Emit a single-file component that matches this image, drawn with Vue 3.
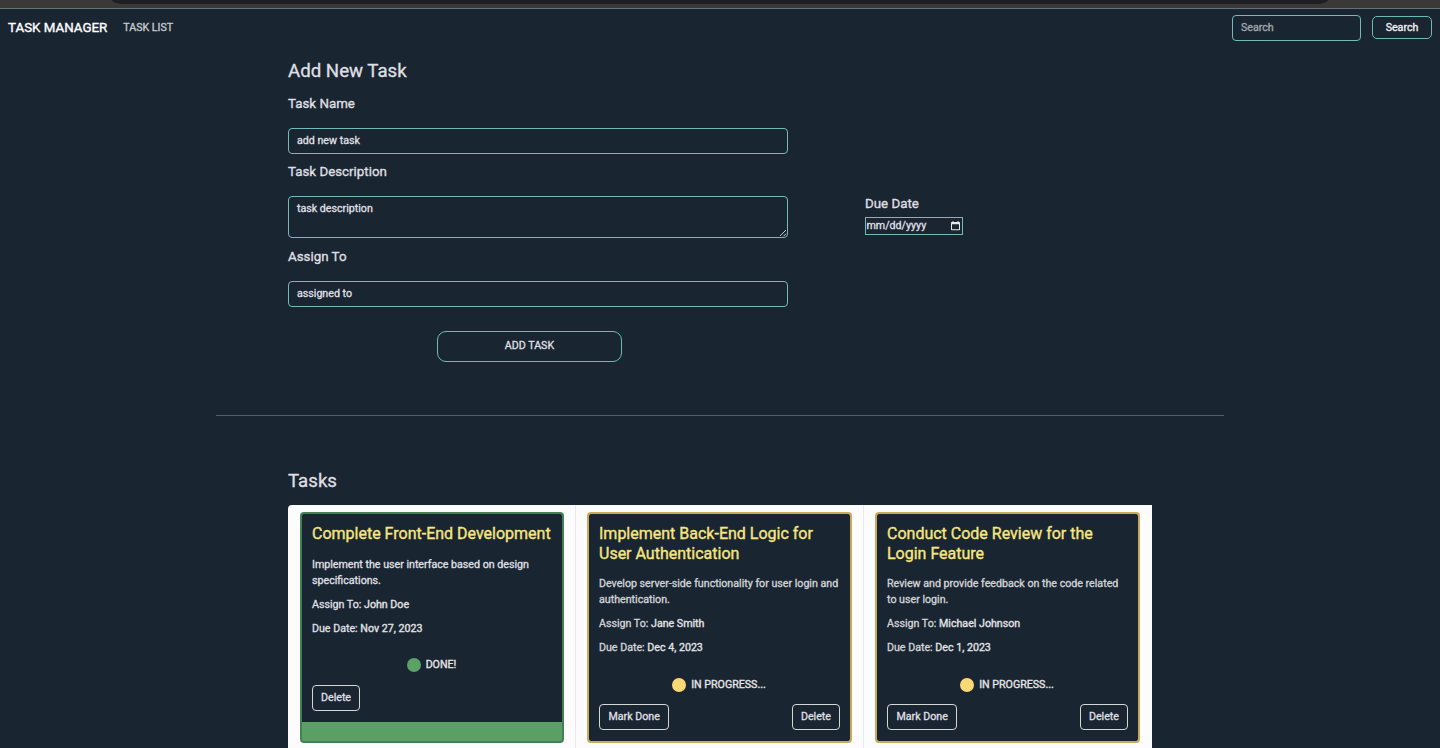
<script setup>
const tasks = [
  { title: ['Complete Front-End Development'], text: ['Implement the user interface based on design', 'specifications.'], who: 'John Doe', due: 'Nov 27, 2023', done: true },
  { title: ['Implement Back-End Logic for', 'User Authentication'], text: ['Develop server-side functionality for user login and', 'authentication.'], who: 'Jane Smith', due: 'Dec 4, 2023', done: false },
  { title: ['Conduct Code Review for the', 'Login Feature'], text: ['Review and provide feedback on the code related', 'to user login.'], who: 'Michael Johnson', due: 'Dec 1, 2023', done: false },
]
</script>

<template>
  <div class="page">
    <div class="chrome"><div class="bar"></div></div>
    <nav class="nav">
      <span class="brand">TASK MANAGER</span>
      <span class="link">TASK LIST</span>
      <div class="search">Search</div>
      <button class="search-btn">Search</button>
    </nav>
    <main class="main">
      <h3>Add New Task</h3>
      <div class="form">
        <div class="fields">
          <h5>Task Name</h5>
          <div class="input">add new task</div>
          <h5>Task Description</h5>
          <div class="input area">task description
            <svg class="grip" width="8" height="8" viewBox="0 0 8 8"><path d="M1 7l6-6M4.5 7.2L7 4.7" stroke="#dcdcdc" stroke-width=".9" fill="none" /></svg>
          </div>
          <h5>Assign To</h5>
          <div class="input">assigned to</div>
          <button class="add">ADD TASK</button>
        </div>
        <div class="due">
          <h5>Due Date</h5>
          <div class="date">
            <span>mm/dd/yyyy</span>
            <svg width="9" height="10" viewBox="0 0 9 10"><path d="M.8 1H1.5V0h1v1h4V0h1v1h.7q.8 0 .8.8v6.6q0 .8-.8.8H.8q-.8 0-.8-.8V1.8Q0 1 .8 1zM1 3.3v4.9h7V3.3z" fill="#e8e8e8" fill-rule="evenodd" /></svg>
          </div>
        </div>
      </div>
    </main>
    <hr>
    <section class="tasks">
      <h3>Tasks</h3>
      <div class="group">
        <div v-for="t in tasks" :key="t.title[0]" class="cell">
          <article class="card" :class="{ done: t.done }">
            <div class="body">
              <h4><div v-for="l in t.title" :key="l">{{ l }}</div></h4>
              <p><span v-for="l in t.text" :key="l" class="line">{{ l }}</span></p>
              <p>Assign To: <b>{{ t.who }}</b></p>
              <p>Due Date: <b>{{ t.due }}</b></p>
              <div class="status"><i></i>{{ t.done ? 'DONE!' : 'IN PROGRESS...' }}</div>
              <div class="actions">
                <button v-if="!t.done">Mark Done</button>
                <button>Delete</button>
              </div>
            </div>
          </article>
        </div>
      </div>
    </section>
  </div>
</template>

<style>
body { margin: 0; background: #1a2532; overflow: hidden; }
</style>

<style scoped>
* { box-sizing: border-box; }
.page { height: 748px; overflow: hidden; background: #1a2532; color: #dedfe0; font: 400 10.67px/16px Roboto, sans-serif; -webkit-text-stroke: .35px currentColor; }
.chrome { height: 9px; background: #3a3937; border-bottom: 1px solid #687276; padding: 0 112px; }
.bar { height: 4px; background: #1e1f23; border-radius: 0 0 12px 12px / 0 0 4px 4px; }
.nav { height: 38px; display: flex; align-items: center; padding: 0 8px; }
.brand { font-size: 13.33px; color: #fff; margin-right: 16px; }
.link { color: #c4c8cc; margin-right: auto; }
.search { width: 129px; height: 26px; border: 1px solid #72bbb8; border-radius: 4px; padding: 4px 8px; color: #9fa6ac; margin-right: 11px; }
button { font: inherit; color: inherit; background: transparent; padding: 0; -webkit-text-stroke: inherit; }
.search-btn { width: 60px; height: 23px; margin-bottom: 1px; border: 1px solid #6fb9b4; border-radius: 5px; color: #eee; }
.main { width: 864px; margin: 0 auto; padding-top: 13px; height: 368px; }
h3, h4, h5 { margin: 0; font-weight: 400; }
h3 { font-size: 18.67px; line-height: 23px; }
h5 { font-size: 13.33px; line-height: 16px; }
.form { display: flex; padding-top: 13px; }
.fields { width: 500px; }
.input { height: 26px; border: 1px solid #72bbb8; border-radius: 4px; padding: 4px 8px; margin: 16px 0 10px; position: relative; }
.area { height: 42px; margin-bottom: 11px; }
.grip { position: absolute; right: 0; bottom: 0; }
.add { display: block; width: 185px; height: 31px; border: 1px solid #6fb9b4; border-radius: 9px; margin: 24px 0 0 149px; padding-bottom: 2px; }
.due { margin: 100px 0 0 77px; }
.date { width: 98px; height: 18px; margin-top: 5px; border: 1px solid #72bbb8; padding: 0 2px 0 .5px; display: flex; align-items: center; justify-content: space-between; }
hr { width: 1008px; height: 1px; margin: 0 auto; border: 0; background: #566069; }
.tasks { width: 864px; margin: 0 auto; padding-top: 54px; }
.group { display: flex; background: #fcfcfd; margin-top: 12px; height: 260px; border-radius: 4px 0 0 0; }
.cell { width: 288px; height: 243px; padding: 7px 11px 5px 11px; border-right: 1px solid #e9e9f3; }
.cell:first-child { padding-left: 12px; }
.cell:last-child { border: 0; padding-right: 12px; }
.card { height: 231px; border: 2px solid #c7aa5b; border-radius: 4px; background: #1a2532; overflow: hidden; }
.done { background: #5aa065; border-color: #467f56; }
.body { background: #1a2532; padding: 10px 10px 11px; }
h4 { font-size: 16px; line-height: 19.5px; color: #f8e67e; margin-bottom: 13px; white-space: nowrap; }
p { margin: 0 0 8px; white-space: nowrap; color: #cfd2d5; }
.done p { color: #dedfe0; }
.line { display: block; }
b { font-weight: 400; color: #e2e3e4; }
.status { display: flex; align-items: center; justify-content: center; padding: 1px 1px 0 0; height: 40px; gap: 5px; color: #e6e6e6; }
i { width: 14px; height: 14px; border-radius: 50%; background: #f8d974; }
.done i { background: #5ba266; }
.actions { display: flex; justify-content: space-between; }
.actions button { border: 1px solid #d4d6d8; border-radius: 4px; height: 26px; padding: 0 8px; }
.actions button:not(:last-child) { padding: 0 8.5px; }
</style>
